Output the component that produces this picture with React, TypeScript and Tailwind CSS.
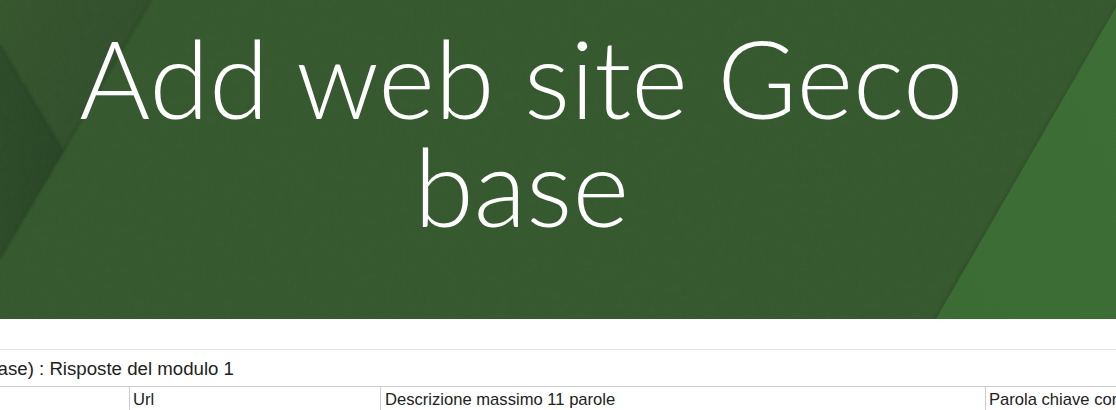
export default function App() {
  return (
    <div className="w-[1116px] h-[410px] overflow-hidden bg-white font-['Liberation_Sans',Arial,sans-serif]">
      <div className="relative h-[319px] bg-[#37592f] overflow-hidden">
        <svg className="absolute inset-0" width="1116" height="319" viewBox="0 0 1116 319">
          <defs>
            <linearGradient id="wedge" x1="0" y1="0" x2="1" y2="0">
              <stop offset="0" stopColor="#2e4c29" />
              <stop offset="1" stopColor="#294626" />
            </linearGradient>
            <linearGradient id="top" x1="0" y1="0" x2="1" y2="0.4">
              <stop offset="0" stopColor="#37572f" />
              <stop offset="1" stopColor="#324f2c" />
            </linearGradient>
            <linearGradient id="right" x1="0" y1="1" x2="1" y2="0">
              <stop offset="0" stopColor="#3a6c33" />
              <stop offset="1" stopColor="#3c6e35" />
            </linearGradient>
            <filter id="soft"><feGaussianBlur stdDeviation="1.2" /></filter>
            <filter id="grain" x="0" y="0" width="100%" height="100%">
              <feTurbulence type="fractalNoise" baseFrequency="0.12" numOctaves="2" seed="4" />
              <feColorMatrix values="0 0 0 0 0.1  0 0 0 0 0.2  0 0 0 0 0.1  0.5 0 0 0 -0.2" />
            </filter>
          </defs>
          <polygon points="0,0 151,0 64,151 0,45" fill="url(#top)" />
          <polygon points="0,45 64,151 0,259" fill="url(#wedge)" />
          <line x1="151" y1="0" x2="0" y2="259" stroke="#2b4827" strokeWidth="1.5" filter="url(#soft)" />
          <line x1="0" y1="45" x2="64" y2="151" stroke="#2a4726" strokeWidth="1.5" filter="url(#soft)" />
          <line x1="1118" y1="4" x2="935" y2="319" stroke="#30502b" strokeWidth="3" filter="url(#soft)" />
          <polygon points="1116,7 1116,319 936,319" fill="url(#right)" />
          <rect width="1116" height="319" filter="url(#grain)" opacity="0.2" />
        </svg>
        <h1 className="relative w-[1043px] pt-[24px] px-[60px] text-center text-[108.5px] leading-[107.5px] font-light text-white font-['Lato',sans-serif]">
          Add web site Geco base
        </h1>
      </div>
      <div className="h-[31px] border-b border-[#e4e4e4]" />
      <div className="flex items-center h-[36px] pt-[1px] overflow-hidden">
        <div className="flex justify-end w-[234px] shrink-0 overflow-hidden whitespace-nowrap text-[18.67px] text-[#222222]">
          <span>(base) : Risposte del modulo 1</span>
        </div>
      </div>
      <div className="flex h-[25px] border-t border-[#cccccc] text-[16.6px] text-[#222222] whitespace-nowrap overflow-hidden">
        <div className="w-[130px] shrink-0 border-r border-[#cccccc]" />
        <div className="w-[251px] shrink-0 border-r border-[#cccccc] pl-[3px] pt-[1px]">Url</div>
        <div className="w-[605px] shrink-0 border-r border-[#cccccc] pl-[4px] pt-[1px]">Descrizione massimo 11 parole</div>
        <div className="pl-[3px] pt-[1px]">Parola chiave contenuta</div>
      </div>
    </div>
  );
}
